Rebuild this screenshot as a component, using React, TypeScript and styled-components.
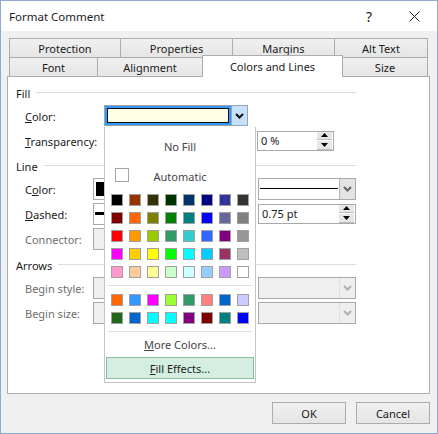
import React from "react";
import styled, { createGlobalStyle } from "styled-components";

const Global = createGlobalStyle`
  html, body { margin: 0; padding: 0; background: #fff; }
  * { box-sizing: border-box; }
  #root { width: 438px; height: 434px; overflow: hidden; }
`;

const Win = styled.div`
  width: 438px; height: 434px;
  display: flex; flex-direction: column;
  background: #f0f0f0;
  border: 1px solid #8fa9d4;
  font-family: "Noto Sans", "Open Sans", sans-serif;
  font-size: 11px;
  color: #1a1a1a;
`;
const TitleBar = styled.div`
  height: 30px; flex: none;
  background: #fff;
  display: flex; align-items: center;
  gap: 15px;
  padding: 0 8px;
  font-size: 11.5px;
`;
const Title = styled.span` flex: 1; `;
const TitleBtn = styled.span`
  width: 30px; height: 22px;
  display: flex; align-items: center; justify-content: center;
  font-size: 14px;
`;
const Body = styled.div`
  flex: 1; display: flex; flex-direction: column;
  padding: 7px 7px 0 6px;
`;
const TabRow = styled.div`
  display: flex; height: 19px; padding-left: 2px; flex: none;
`;
const Tab = styled.div<{ $w: number; $active?: boolean }>`
  width: ${p => p.$w}px;
  height: ${p => (p.$active ? 22 : 20)}px;
  margin-top: ${p => (p.$active ? -2 : 0)}px;
  border: 1px solid #acacac;
  border-bottom: ${p => (p.$active ? "none" : "1px solid #acacac")};
  background: ${p => (p.$active ? "#fff" : "linear-gradient(#f0f0f0, #e5e5e5)")};
  position: relative;
  z-index: ${p => (p.$active ? 3 : 1)};
  margin-right: -1px;
  display: flex; align-items: center; justify-content: center;
`;
const Panel = styled.div`
  position: relative;
  height: 318px; flex: none;
  border: 1px solid #acacac;
  background: #fff;
  padding: 6px 0 0 8px;
  z-index: 2;
`;
const Heading = styled.div<{ $top?: number }>`
  width: 340px; height: 20px;
  margin-top: ${p => p.$top ?? 0}px;
  display: flex; align-items: center; gap: 6px;
  &::after { content: ""; flex: 1; height: 1px; background: #dcdcdc; margin-top: -1px; }
`;
const Row = styled.div<{ $disabled?: boolean }>`
  height: 25px; width: 340px;
  padding-left: 9px;
  display: flex; align-items: center;
  color: ${p => (p.$disabled ? "#6d6d6d" : "inherit")};
`;
const Label = styled.div`
  width: 68px; flex: none; padding-top: 1px; white-space: nowrap;
`;
const Field = styled.div<{ $w: number; $h?: number; $disabled?: boolean }>`
  width: ${p => p.$w}px; height: ${p => p.$h ?? 22}px; flex: none;
  border: 1px solid #a9a9a9;
  background: ${p => (p.$disabled ? "#efefef" : "#fff")};
  display: flex; align-items: center;
`;
const FieldText = styled.span` flex: 1; padding-left: 3px; `;
const Arrow = styled.div<{ $disabled?: boolean }>`
  width: 16px; height: 20px; flex: none;
  background: ${p => (p.$disabled ? "#efefef" : "#e3e3e3")};
  border-left: 1px solid ${p => (p.$disabled ? "#dedede" : "#b4b4b4")};
  display: flex; align-items: center; justify-content: center;
  color: ${p => (p.$disabled ? "#b0b0b0" : "#666")};
`;
const ColorCombo = styled.div`
  width: 144px; height: 21px; margin-left: 11px; flex: none;
  display: flex;
`;
const ColorValue = styled.div`
  flex: 1;
  background: #ffffe5;
  border: 1px solid #111;
  box-shadow: 0 0 0 2px #3399ff, 0 0 0 3px #a0a0a0;
  margin: 3px 0 3px 3px;
`;
const ActiveArrow = styled.div`
  width: 17px; flex: none;
  border: 1px solid #8fa5b8; background: #c6e1f8;
  display: flex; align-items: center; justify-content: center;
  position: relative;
  z-index: 1;
  margin-left: 2px;
`;
const Spin = styled.div`
  width: 15px; height: 18px; flex: none; margin-right: 1px;
  display: flex; flex-direction: column; gap: 1px;
`;
const SpinBtn = styled.div`
  flex: 1; background: #e6e6e6;
  border-bottom: 1px solid #bcbcbc;
  display: flex; align-items: center; justify-content: center;
`;
const LinePreview = styled.div`
  flex: 1; height: 1px; background: #000; margin: 0 1px;
`;
const ColorChip = styled.div`
  width: 40px; height: 14px; background: #000; margin-left: 2px;
`;
const DashChip = styled.div`
  width: 40px; height: 3px; background: #000; margin-left: 1px;
`;
const Chev = ({ c = "currentColor" }: { c?: string }) => (
  <svg width="9" height="6" viewBox="0 0 9 6"><path d="M1 1l3.5 3.5L8 1" fill="none" stroke={c} strokeWidth="2" /></svg>
);
const Tri = ({ up }: { up?: boolean }) => (
  <svg width="7" height="4" viewBox="0 0 7 4"><path d={up ? "M3.5 0L7 4H0z" : "M0 0h7L3.5 4z"} fill="#000" /></svg>
);
const Gap = styled.div<{ $w: number }>` width: ${p => p.$w}px; flex: none; `;

const Menu = styled.div`
  position: absolute;
  left: 96px; top: 50px;
  width: 152px; height: 256px;
  background: #fff;
  border: 1px solid #c6c6c6;
  border-top: none;
  z-index: 5;
  padding: 0 1px;
  display: flex; flex-direction: column;
  color: #444;
`;
const MenuItem = styled.div<{ $h: number; $hot?: boolean }>`
  height: ${p => p.$h}px; flex: none;
  display: flex; align-items: center; justify-content: center;
  ${p => p.$hot ? "background: #d4efe1; border: 1px solid #86c0a2; color: #222;" : ""}
`;
const AutoRow = styled.div`
  height: 22px; flex: none; position: relative;
  display: flex; align-items: center; justify-content: center;
`;
const AutoBox = styled.div`
  position: absolute; left: 9px; top: 3px;
  width: 14px; height: 14px; border: 1px solid #a6a6a6; background: #fff;
`;
const Grid = styled.div<{ $top: number }>`
  display: grid; grid-template-columns: repeat(8, 12px);
  column-gap: 6px; row-gap: 6px;
  margin: ${p => p.$top}px 0 0 5px;
`;
const Swatch = styled.div<{ $c: string }>`
  width: 12px; height: 12px;
  background: ${p => p.$c};
  border: 1px solid #a0a0a0;
`;
const Sep = styled.div<{ $top: number }>`
  height: 1px; background: #e0e0e0; flex: none;
  margin: ${p => p.$top}px 1px 0 1px;
`;
const Footer = styled.div`
  display: flex; justify-content: flex-end; gap: 10px;
  padding: 8px 0 0 0;
`;
const Btn = styled.div`
  width: 74px; height: 22px;
  border: 1px solid #acacac;
  background: linear-gradient(#f0f0f0, #e5e5e5);
  display: flex; align-items: center; justify-content: center;
`;

const main = [
  "000000 993300 333300 003300 003366 000080 333399 333333",
  "800000 FF6600 808000 008000 008080 0000FF 666699 808080",
  "FF0000 FF9900 99CC00 339966 33CCCC 3366FF 800080 969696",
  "FF00FF FFCC00 FFFF00 00FF00 00FFFF 00CCFF 993366 C0C0C0",
  "FF99CC FFCC99 FFFF99 CCFFCC CCFFFF 99CCFF CC99FF FFFFFF",
].join(" ").split(" ");
const extra = [
  "FF6600 3399FF FF00FF 99FF33 339966 FF8080 0066CC CCCCFF",
  "216619 0066CC 00FFFF 00FFFF 800080 800000 008080 0000FF",
].join(" ").split(" ");

export default function App() {
  return (
    <Win>
      <Global />
      <TitleBar>
        <Title>Format Comment</Title>
        <TitleBtn>?</TitleBtn>
        <TitleBtn>
          <svg width="11" height="11" viewBox="0 0 11 11"><path d="M.5.5l10 10M10.5.5l-10 10" stroke="#222" fill="none" /></svg>
        </TitleBtn>
      </TitleBar>
      <Body>
        <TabRow>
          <Tab $w={112}>Protection</Tab>
          <Tab $w={113}>Properties</Tab>
          <Tab $w={103}>Margins</Tab>
          <Tab $w={94}>Alt Text</Tab>
        </TabRow>
        <TabRow>
          <Tab $w={89}>Font</Tab>
          <Tab $w={106}>Alignment</Tab>
          <Tab $w={141} $active>Colors and Lines</Tab>
          <Tab $w={86}>Size</Tab>
        </TabRow>
        <Panel>
          <Heading>Fill</Heading>
          <Row>
            <Label><u>C</u>olor:</Label>
            <ColorCombo>
              <ColorValue />
              <ActiveArrow><Chev c="#111" /></ActiveArrow>
            </ColorCombo>
          </Row>
          <Row>
            <Label><u>T</u>ransparency:</Label>
            <Gap $w={164} />
            <Field $w={77} $h={20}>
              <FieldText>0 %</FieldText>
              <Spin><SpinBtn><Tri up /></SpinBtn><SpinBtn><Tri /></SpinBtn></Spin>
            </Field>
          </Row>
          <Heading $top={3}>Line</Heading>
          <Row>
            <Label>C<u>o</u>lor:</Label>
            <Field $w={152}><ColorChip /></Field>
            <Gap $w={13} />
            <Field $w={98}>
              <LinePreview />
              <Arrow><Chev /></Arrow>
            </Field>
          </Row>
          <Row>
            <Label><u>D</u>ashed:</Label>
            <Field $w={152}><DashChip /></Field>
            <Gap $w={13} />
            <Field $w={98} $h={20}>
              <FieldText>0.75 pt</FieldText>
              <Spin><SpinBtn><Tri up /></SpinBtn><SpinBtn><Tri /></SpinBtn></Spin>
            </Field>
          </Row>
          <Row $disabled>
            <Label>Connector:</Label>
            <Field $w={152} $disabled />
          </Row>
          <Heading $top={4}>Arrows</Heading>
          <Row $disabled>
            <Label>Begin style:</Label>
            <Field $w={152} $disabled />
            <Gap $w={13} />
            <Field $w={98} $disabled><FieldText /><Arrow $disabled><Chev /></Arrow></Field>
          </Row>
          <Row $disabled>
            <Label>Begin size:</Label>
            <Field $w={152} $disabled />
            <Gap $w={13} />
            <Field $w={98} $disabled><FieldText /><Arrow $disabled><Chev /></Arrow></Field>
          </Row>
          <Menu>
            <MenuItem $h={38}>No Fill</MenuItem>
            <AutoRow><AutoBox />Automatic</AutoRow>
            <Grid $top={7}>
              {main.map((c, i) => <Swatch key={i} $c={"#" + c} />)}
            </Grid>
            <Sep $top={7} />
            <Grid $top={8}>
              {extra.map((c, i) => <Swatch key={i} $c={"#" + c} />)}
            </Grid>
            <Sep $top={7} />
            <MenuItem $h={25}><u>M</u>ore Colors...</MenuItem>
            <MenuItem $h={22} $hot><u>F</u>ill Effects...</MenuItem>
          </Menu>
        </Panel>
        <Footer>
          <Btn>OK</Btn>
          <Btn>Cancel</Btn>
        </Footer>
      </Body>
    </Win>
  );
}
